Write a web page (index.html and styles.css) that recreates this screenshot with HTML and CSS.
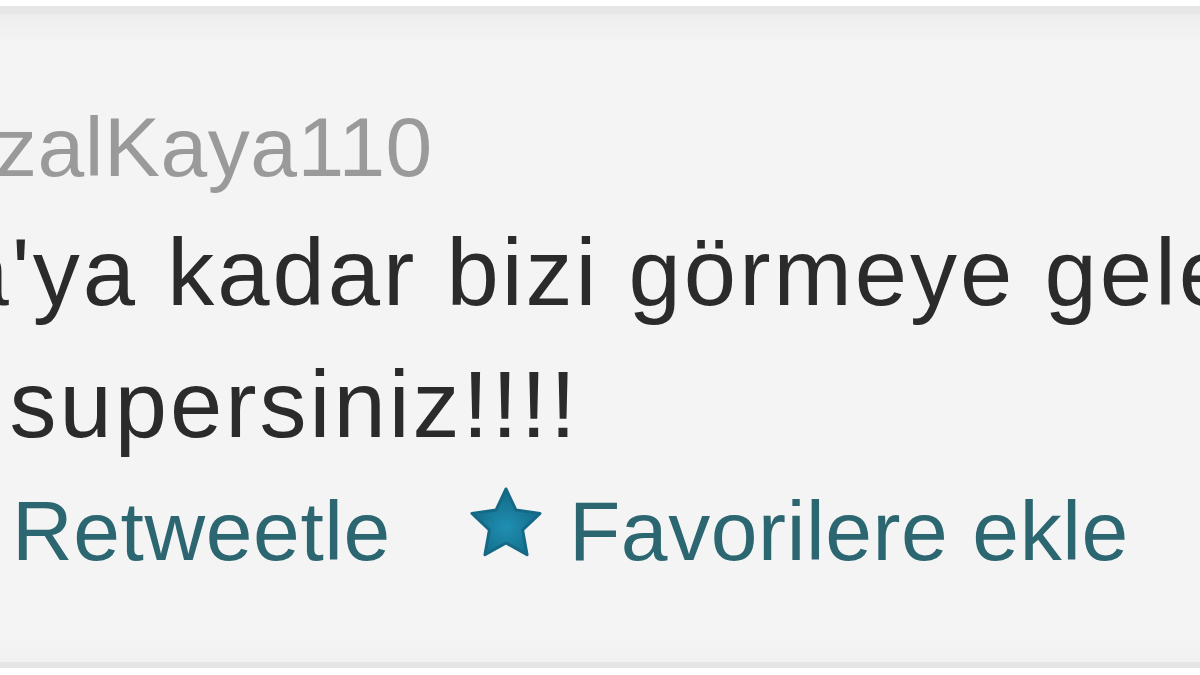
FILE: index.html
```html
<!DOCTYPE html>
<html lang="tr">
<head>
<meta charset="utf-8">
<title>Tweet</title>
<link rel="stylesheet" href="styles.css">
</head>
<body>
<div class="page">
  <article class="tweet">
    <div class="author"><span class="handle">GüzalKaya110</span></div>
    <div class="text">
      <span class="line line-1">Ankara'ya kadar bizi görmeye gelen herkese</span>
      <span class="line line-2">çok supersiniz!!!!</span>
    </div>
    <div class="actions">
      <a class="action retweet" href="#">Retweetle</a>
      <a class="action favorite" href="#">
        <svg class="star" viewBox="0 0 100 100" aria-hidden="true">
          <defs>
            <radialGradient id="star-fill" cx="50%" cy="58%" r="55%">
              <stop offset="0" stop-color="#1f8fb3" />
              <stop offset="1" stop-color="#146a86" />
            </radialGradient>
          </defs>
          <polygon points="50,4 63.5,32.5 96,37 72.5,59.5 78.5,93 50,77 21.5,93 27.5,59.5 4,37 36.5,32.5" />
        </svg>
        <span>Favorilere ekle</span>
      </a>
    </div>
  </article>
</div>
</body>
</html>
```

FILE: styles.css
```css
html, body {
  margin: 0;
  padding: 0;
  background: #ffffff;
  overflow: hidden;
}

.page {
  width: 1200px;
  height: 675px;
  padding-top: 6px;
  box-sizing: border-box;
}

.tweet {
  height: 662px;
  box-sizing: border-box;
  border-top: 8px solid #e6e6e6;
  border-bottom: 6px solid #e5e5e5;
  background: linear-gradient(to bottom, #eeeeee 0, #f4f4f4 30px, #f4f4f4 620px, #f1f1f1 648px, #f6f6f6 656px);
  padding-top: 83px;
  font-family: "Liberation Sans", Arial, sans-serif;
  overflow: hidden;
}

.author {
  height: 100px;
  line-height: 100px;
  font-size: 84px;
  color: #9a9a9a;
  white-space: nowrap;
}

.handle {
  display: inline-block;
  margin-left: -118px;
  letter-spacing: 0.5px;
}

.text {
  margin-top: 10px;
  font-size: 94px;
  line-height: 132px;
  color: #2b2b2b;
  letter-spacing: 3px;
  white-space: nowrap;
}

.line {
  display: block;
}

.line-1 {
  margin-left: -304px;
}

.line-2 {
  margin-left: -175px;
}

.actions {
  margin-top: 10px;
  height: 100px;
  display: flex;
  align-items: center;
  padding-left: 12px;
  font-size: 84px;
  line-height: 100px;
  letter-spacing: 0.6px;
  white-space: nowrap;
}

.action {
  color: #2c6670;
  text-decoration: none;
}

.favorite {
  display: flex;
  align-items: center;
  margin-left: 78px;
}

.star {
  width: 74px;
  height: 74px;
  margin-right: 26px;
  margin-top: -16px;
  fill: url(#star-fill);
  stroke: #146a86;
  stroke-width: 4;
  stroke-linejoin: round;
}
```
